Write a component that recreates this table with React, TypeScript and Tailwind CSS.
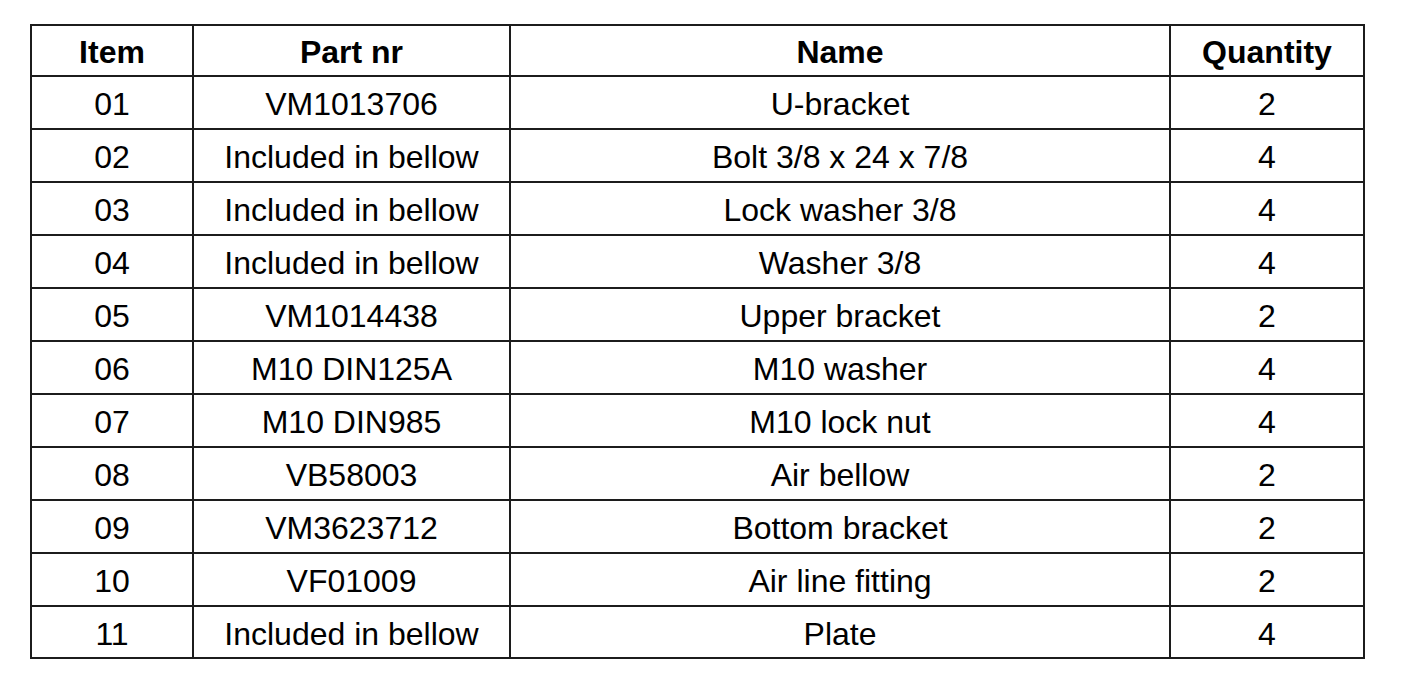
const ROWS: [string, string, string, number][] = [
  ["01", "VM1013706", "U-bracket", 2],
  ["02", "Included in bellow", "Bolt 3/8 x 24 x 7/8", 4],
  ["03", "Included in bellow", "Lock washer 3/8", 4],
  ["04", "Included in bellow", "Washer 3/8", 4],
  ["05", "VM1014438", "Upper bracket", 2],
  ["06", "M10 DIN125A", "M10 washer", 4],
  ["07", "M10 DIN985", "M10 lock nut", 4],
  ["08", "VB58003", "Air bellow", 2],
  ["09", "VM3623712", "Bottom bracket", 2],
  ["10", "VF01009", "Air line fitting", 2],
  ["11", "Included in bellow", "Plate", 4],
];

const cell = "border-2 border-[#1c1c1c] text-center align-middle p-0 pt-[3px]";

export default function App() {
  return (
    <div className="w-[1403px] h-[691px] bg-white pt-[24px] pl-[30px] font-['Liberation_Sans',Arial,sans-serif] text-black">
      <table className="border-collapse border-2 border-[#1c1c1c] text-[32px] leading-none">
        <colgroup>
          <col className="w-[162px]" />
          <col className="w-[317px]" />
          <col className="w-[660px]" />
          <col className="w-[194px]" />
        </colgroup>
        <thead>
          <tr className="h-[51px] font-bold">
            <th className={cell}>Item</th>
            <th className={cell}>Part nr</th>
            <th className={cell}>Name</th>
            <th className={cell}>Quantity</th>
          </tr>
        </thead>
        <tbody>
          {ROWS.map(([item, part, name, qty], i) => (
            <tr key={item} className={i === ROWS.length - 1 ? "h-[52px]" : "h-[53px]"}>
              <td className={cell}>{item}</td>
              <td className={cell}>{part}</td>
              <td className={cell}>{name}</td>
              <td className={cell}>{qty}</td>
            </tr>
          ))}
        </tbody>
      </table>
    </div>
  );
}
